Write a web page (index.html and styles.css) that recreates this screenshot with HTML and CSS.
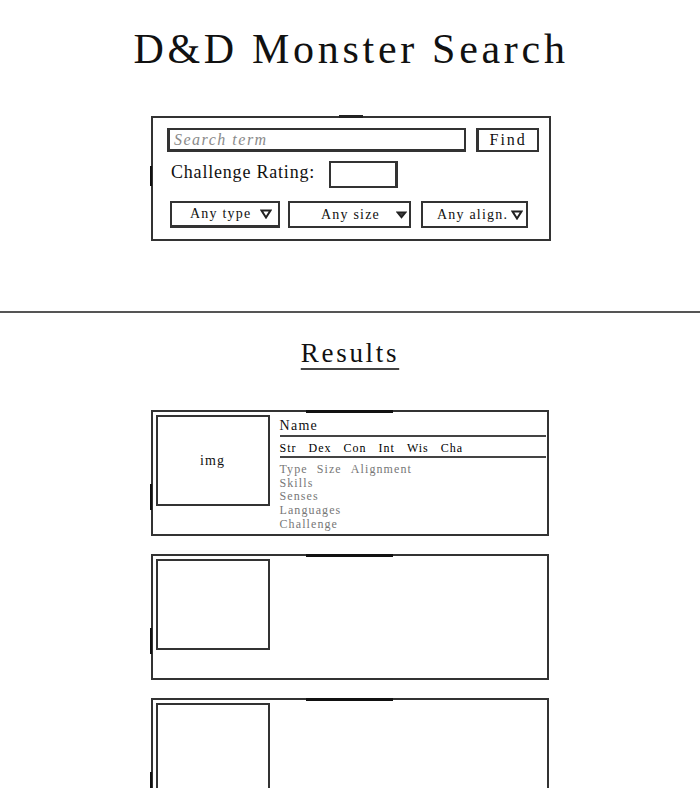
FILE: index.html
```html
<!DOCTYPE html>
<html lang="en">
<head>
<meta charset="utf-8">
<title>D&amp;D Monster Search</title>
<link rel="stylesheet" href="styles.css">
</head>
<body>
<header class="top">
  <h1 class="title">D&amp;D Monster Search</h1>
  <div class="search">
    <div class="row row-query">
      <div class="field query">Search term</div>
      <div class="btn">Find</div>
    </div>
    <div class="row row-cr">
      <span class="label">Challenge Rating:</span>
      <div class="field cr"></div>
    </div>
    <div class="row row-selects">
      <div class="select s-type"><span>Any type</span><svg class="arrow" viewBox="0 0 12 10" width="12" height="10"><polygon points="1.5,1.5 10.5,1.5 6,8.5" fill="#fff" stroke="#222" stroke-width="2"/></svg></div>
      <div class="select s-size"><span>Any size</span><svg class="arrow arrow-sm" viewBox="0 0 12 9" width="11" height="8"><polygon points="1.5,1.5 10.5,1.5 6,7" fill="#444" stroke="#222" stroke-width="2"/></svg></div>
      <div class="select s-align"><span>Any align.</span><svg class="arrow" viewBox="0 0 12 10" width="12" height="10"><polygon points="1.5,1.5 10.5,1.5 6,8.5" fill="#fff" stroke="#222" stroke-width="2"/></svg></div>
    </div>
  </div>
</header>
<hr class="divider">
<main class="results">
  <h2 class="results-title">Results</h2>
  <div class="card">
    <div class="thumb">img</div>
    <div class="info">
      <div class="name">Name</div>
      <div class="stats"><span>Str</span><span>Dex</span><span>Con</span><span>Int</span><span>Wis</span><span>Cha</span></div>
      <div class="details">
        <div class="detail-row"><span>Type</span><span>Size</span><span>Alignment</span></div>
        <div>Skills</div>
        <div>Senses</div>
        <div>Languages</div>
        <div>Challenge</div>
      </div>
    </div>
  </div>
  <div class="card">
    <div class="thumb"></div>
    <div class="info"></div>
  </div>
  <div class="card">
    <div class="thumb"></div>
    <div class="info"></div>
  </div>
</main>
</body>
</html>
```
FILE: styles.css
```css
* { box-sizing: border-box; }
html, body { margin: 0; padding: 0; background: #fff; }
body {
  width: 700px;
  font-family: "Liberation Serif", "Times New Roman", serif;
  color: #111;
}
.top {
  padding-top: 26px;
  display: flex;
  flex-direction: column;
  align-items: center;
}
.title {
  margin: 0 0 44px 2px;
  font-size: 42px;
  line-height: 46px;
  font-weight: normal;
  letter-spacing: 3.7px;
  color: #111;
}
.search {
  position: relative;
  width: 400px;
  margin-left: 2px;
  border: 2px solid #333;
  padding: 10px 10px 11px 14px;
}
.search::before {
  content: "";
  position: absolute;
  top: -3px;
  left: 186px;
  width: 24px;
  height: 3px;
  background: #222;
}
.search::after {
  content: "";
  position: absolute;
  top: 48px;
  left: -3px;
  width: 2px;
  height: 20px;
  background: #111;
}
.row { display: flex; align-items: center; }
.row-query { gap: 10px; }
.field {
  border: 2px solid #333;
  background: #fff;
}
.query {
  width: 301px;
  height: 24px;
  padding: 0 0 0 4px;
  font-size: 16px;
  line-height: 19px;
  font-style: italic;
  letter-spacing: 1.5px;
  color: #8a8a8a;
  border-bottom-width: 3px;
  border-left-width: 3px;
}
.btn {
  width: 63px;
  height: 24px;
  border: 2px solid #333;
  border-left-width: 3px;
  font-size: 16px;
  line-height: 19px;
  letter-spacing: 2px;
  text-align: center;
  color: #111;
}
.row-cr {
  margin-top: 9px;
  padding-left: 4px;
  gap: 14px;
  align-items: flex-start;
}
.label {
  margin-top: 1px;
  font-size: 18px;
  line-height: 21px;
  letter-spacing: 0.8px;
  color: #111;
}
.cr {
  width: 69px;
  height: 27px;
  border-right-width: 3px;
}
.row-selects {
  margin-top: 13px;
  padding-left: 3px;
  gap: 8px;
}
.select {
  height: 27px;
  border: 2px solid #333;
  display: flex;
  align-items: center;
  justify-content: space-between;
  font-size: 14px;
  letter-spacing: 1.2px;
  color: #111;
}
.select span { line-height: 16px; }
.arrow { display: block; flex: none; }
.s-type { width: 110px; padding: 0 6px 0 18px; border-bottom-width: 3px; }
.s-size { width: 123px; padding: 0 2px 0 31px; margin-right: 2px; }
.s-align { width: 107px; padding: 0 3px 0 14px; }
.divider {
  margin: 70px 0 0 0;
  border: 0;
  height: 2px;
  background: #555;
}
.results {
  padding-top: 24px;
  display: flex;
  flex-direction: column;
  align-items: center;
}
.results-title {
  margin: 0 0 41px 0;
  font-size: 27px;
  line-height: 32px;
  font-weight: normal;
  letter-spacing: 2.7px;
  color: #111;
  text-decoration: underline;
  text-decoration-thickness: 2px;
  text-underline-offset: 6px;
  text-decoration-color: #444;
}
.card {
  position: relative;
  width: 398px;
  height: 126px;
  margin-bottom: 18px;
  margin-right: 1px;
  border: 2px solid #333;
  padding: 3px 1px 3px 3px;
  display: flex;
  gap: 10px;
}
.card::before {
  content: "";
  position: absolute;
  top: -2px;
  left: 153px;
  width: 87px;
  height: 3px;
  background: #111;
}
.card::after {
  content: "";
  position: absolute;
  left: -3px;
  top: 72px;
  width: 2px;
  height: 26px;
  background: #111;
}
.thumb {
  flex: none;
  width: 114px;
  height: 91px;
  border: 2px solid #333;
  display: flex;
  align-items: center;
  justify-content: center;
  font-size: 14px;
  letter-spacing: 1px;
  color: #111;
}
.info {
  flex: 1;
  min-width: 0;
}
.name {
  font-size: 14px;
  line-height: 16px;
  letter-spacing: 1.3px;
  padding-top: 3px;
  padding-bottom: 1px;
  border-bottom: 2px solid #444;
}
.stats {
  display: flex;
  gap: 12px;
  font-size: 12px;
  line-height: 14px;
  letter-spacing: 1px;
  padding-top: 4px;
  padding-bottom: 1px;
  border-bottom: 2px solid #444;
  color: #000;
}
.details {
  margin-top: 5px;
  font-size: 12px;
  line-height: 13.7px;
  letter-spacing: 1.1px;
  color: #777;
}
.detail-row { display: flex; gap: 9px; }
```
